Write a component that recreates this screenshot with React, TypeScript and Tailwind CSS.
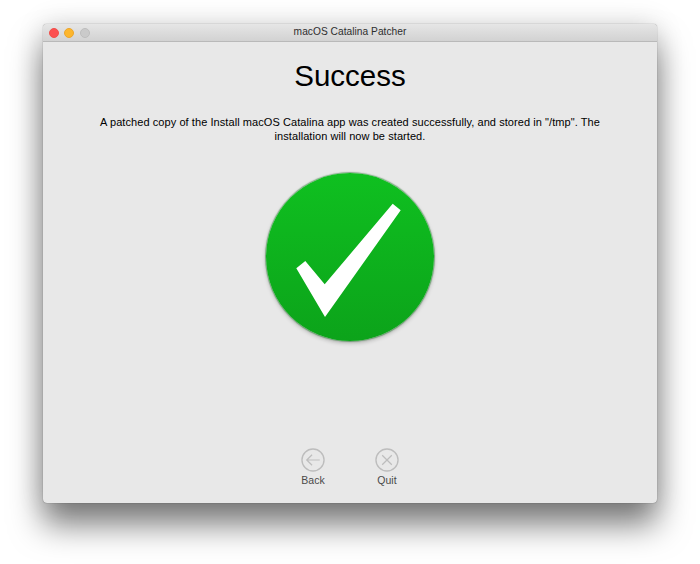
export default function App() {
  return (
    <div className="h-[564px] w-[700px] overflow-hidden bg-white pt-6 pl-[43px] font-['Liberation_Sans',sans-serif]">
      <div className="flex h-[479px] w-[614px] flex-col overflow-hidden rounded-[4px] bg-[#e8e8e8] shadow-[0_0_1px_rgba(0,0,0,0.6),0_22px_32px_rgba(0,0,0,0.5),0_0_28px_rgba(0,0,0,0.14)]">
        <TitleBar />
        <div className="flex flex-1 flex-col items-center">
          <h1 className="mt-[14px] text-[29.5px] leading-[40px] text-black">Success</h1>
          <p className="mt-[19px] w-[520px] text-center text-[11px] leading-[14px] tracking-[0.07px] text-black">
            A patched copy of the Install macOS Catalina app was created successfully, and stored in "/tmp". The
            installation will now be started.
          </p>
          <SuccessBadge />
          <div className="mt-auto mb-[17px] flex gap-[44px]">
            <ActionButton label="Back">
              <path d="M19.5 12.5H6.5M11.5 7l-5.5 5.5 5.5 5.5" />
            </ActionButton>
            <ActionButton label="Quit">
              <path d="M7.5 7.5l10 10M17.5 7.5l-10 10" />
            </ActionButton>
          </div>
        </div>
      </div>
    </div>
  );
}

function TitleBar() {
  return (
    <div className="relative flex h-[18px] shrink-0 items-center justify-center border-b border-[#b9b9b9] bg-gradient-to-b from-[#e6e6e6] to-[#d2d2d2]">
      <div className="absolute top-[4px] left-[6px] flex gap-[5.4px]">
        <span className="h-[10px] w-[10px] rounded-full border border-[#f0504a] bg-[#fc5050]" />
        <span className="h-[10px] w-[10px] rounded-full border border-[#eba52c] bg-[#fdb62c]" />
        <span className="h-[10px] w-[10px] rounded-full border border-[#bdbdbd] bg-[#cacaca]" />
      </div>
      <span className="text-[10.2px] leading-none tracking-[0.03px] text-[#2e2e2e]">macOS Catalina Patcher</span>
    </div>
  );
}

function SuccessBadge() {
  return (
    <div className="mt-[30px] flex h-[168px] w-[168px] items-center justify-center rounded-full bg-gradient-to-b from-[#0fc020] to-[#0ca31a] shadow-[0_0_1px_1px_rgba(9,110,20,0.45),0_2px_4px_rgba(0,0,0,0.25)]">
      <svg width="168" height="168" viewBox="266 172 168 168">
        <polygon
          points="392.7,202.7 400.7,209.3 325,316 296.3,267.3 305.3,260 324.7,283.3"
          fill="#ffffff"
        />
      </svg>
    </div>
  );
}

function ActionButton({ label, children }: { label: string; children: React.ReactNode }) {
  return (
    <div className="flex w-[30px] flex-col items-center">
      <svg width="24" height="24" viewBox="0 0 25 25" fill="none" stroke="#bdbdbd" strokeWidth="1.3">
        <circle cx="12.5" cy="12.5" r="11.5" strokeWidth="1.4" />
        {children}
      </svg>
      <span className="mt-[2px] text-[10.5px] leading-[12px] text-[#4a4a4a]">{label}</span>
    </div>
  );
}
